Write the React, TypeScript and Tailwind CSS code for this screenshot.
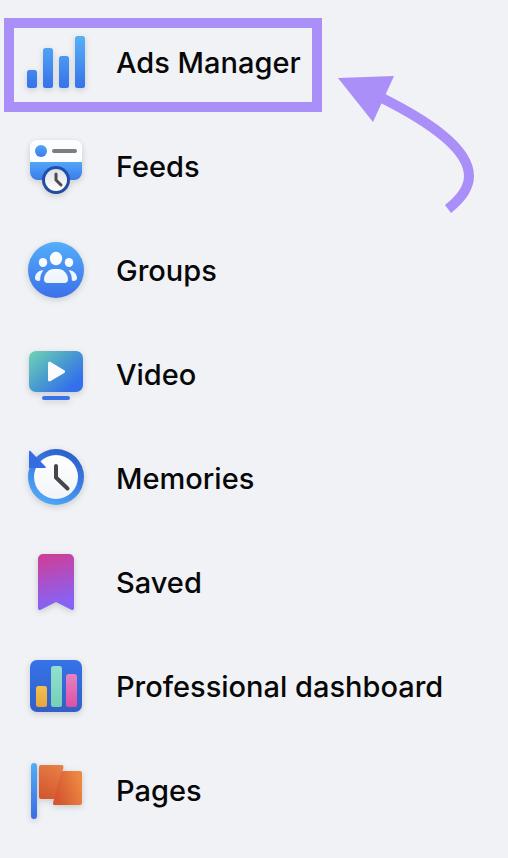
import type { ReactNode } from "react"

interface Shortcut {
  label: string
  link: string
  icon: ReactNode
}

function AdsManagerIcon() {
  return (
    <>
      <defs>
        <linearGradient id="ads-bar" gradientUnits="userSpaceOnUse" x1="0" y1="10" x2="0" y2="62">
          <stop offset="0" stopColor="#56b1f9" />
          <stop offset="1" stopColor="#3672ea" />
        </linearGradient>
      </defs>
      <g fill="url(#ads-bar)">
        <rect x="7" y="44" width="10" height="18" rx="2.5" />
        <rect x="23" y="22" width="10" height="40" rx="2.5" />
        <rect x="39" y="30" width="10" height="32" rx="2.5" />
        <rect x="55" y="10" width="10" height="52" rx="2.5" />
      </g>
    </>
  )
}

function FeedsIcon() {
  return (
    <>
      <defs>
        <linearGradient id="feeds-card" x1="0" y1="0" x2="0" y2="1">
          <stop offset="0" stopColor="#51a7f8" />
          <stop offset="1" stopColor="#3b7aea" />
        </linearGradient>
        <linearGradient id="feeds-face" x1="0" y1="0" x2="0" y2="1">
          <stop offset="0" stopColor="#dfe0e3" />
          <stop offset="1" stopColor="#ffffff" />
        </linearGradient>
        <linearGradient id="feeds-ring" x1="0" y1="0" x2="0" y2="1">
          <stop offset="0" stopColor="#1f4fae" />
          <stop offset="1" stopColor="#244a9e" />
        </linearGradient>
      </defs>
      <path d="M10 32V17a7 7 0 0 1 7-7h38a7 7 0 0 1 7 7v15z" fill="#fcfdfe" />
      <path d="M10 32h52v10a8 8 0 0 1-8 8H18a8 8 0 0 1-8-8z" fill="url(#feeds-card)" />
      <circle cx="21" cy="21" r="6" fill="url(#feeds-card)" />
      <path d="M34 21h21" stroke="#7b7d80" strokeWidth="4" strokeLinecap="round" />
      <circle cx="36" cy="50" r="14" fill="url(#feeds-ring)" />
      <circle cx="36" cy="50" r="11" fill="url(#feeds-face)" />
      <path d="M36 44v6l5 5" fill="none" stroke="#4b4c4f" strokeWidth="3" strokeLinecap="round" strokeLinejoin="round" />
    </>
  )
}

function GroupsIcon() {
  return (
    <>
      <defs>
        <linearGradient id="groups-disc" x1="0" y1="0" x2="0" y2="1">
          <stop offset="0" stopColor="#53aef8" />
          <stop offset="1" stopColor="#3b70ea" />
        </linearGradient>
        <linearGradient id="groups-people" gradientUnits="userSpaceOnUse" x1="0" y1="17" x2="0" y2="49">
          <stop offset="0" stopColor="#ffffff" />
          <stop offset="1" stopColor="#eef3fb" />
        </linearGradient>
      </defs>
      <circle cx="36" cy="36" r="28" fill="url(#groups-disc)" />
      <g fill="url(#groups-people)">
        <ellipse cx="36" cy="24.5" rx="6.2" ry="6.7" />
        <ellipse cx="23" cy="28.5" rx="4.2" ry="4.6" />
        <ellipse cx="49" cy="28.5" rx="4.2" ry="4.6" />
        <path d="M34 35h4c5.500 0 10 5 10 10.500 0 2-1.400 3.500-3.300 3.500H27.300C25.400 49 24 47.500 24 45.500 24 40 28.500 35 34 35z" />
        <path d="M22.500 36.200c.6 0 .7.500.4.900-1.800 2.400-2.700 5-2.700 8.200 0 1.100-.4 1.700-1.400 1.700-2.400 0-3.800-1-3.800-3 0-4 3.500-7.800 7.500-7.800z" />
        <path d="M49.500 36.200c-.6 0-.7.500-.4.900 1.800 2.400 2.700 5 2.700 8.200 0 1.100.4 1.700 1.400 1.700 2.400 0 3.800-1 3.800-3 0-4-3.500-7.800-7.500-7.800z" />
      </g>
    </>
  )
}

function VideoIcon() {
  return (
    <>
      <defs>
        <linearGradient id="video-screen" gradientUnits="userSpaceOnUse" x1="14" y1="13" x2="52" y2="56">
          <stop offset="0" stopColor="#6bceb6" />
          <stop offset="0.45" stopColor="#4b9fcc" />
          <stop offset="0.9" stopColor="#3570ec" />
        </linearGradient>
      </defs>
      <rect x="9" y="13" width="54" height="41" rx="7" fill="url(#video-screen)" />
      <path d="M28 25.500c0-1.500 1.300-2.200 2.600-1.400l13.600 8.100c1.200.7 1.200 2 0 2.700l-13.600 8.200c-1.300.8-2.600.1-2.600-1.400z" fill="#fafcfe" />
      <rect x="22" y="58" width="28" height="4" rx="2" fill="#3a72e8" />
    </>
  )
}

function MemoriesIcon() {
  return (
    <>
      <defs>
        <linearGradient id="memories-ring" gradientUnits="userSpaceOnUse" x1="46" y1="8" x2="20" y2="60">
          <stop offset="0" stopColor="#2a5fca" />
          <stop offset="0.5" stopColor="#3d82e6" />
          <stop offset="1" stopColor="#4fabf5" />
        </linearGradient>
        <linearGradient id="memories-face" x1="0" y1="0" x2="0" y2="1">
          <stop offset="0" stopColor="#ffffff" />
          <stop offset="1" stopColor="#f1f4f8" />
        </linearGradient>
      </defs>
      <circle cx="36" cy="35" r="28" fill="url(#memories-ring)" />
      <circle cx="36" cy="35" r="22" fill="url(#memories-face)" />
      <path d="M9 9.500c0-.9.800-1.100 1.400-.5l15 15.500c.8.800.3 1.500-.5 1.500H9z" fill="#356ce4" />
      <path d="M36 24v11.500l11.500 11" fill="none" stroke="#464749" strokeWidth="4" strokeLinecap="round" strokeLinejoin="round" />
    </>
  )
}

function SavedIcon() {
  return (
    <>
      <defs>
        <linearGradient id="saved-ribbon" gradientUnits="userSpaceOnUse" x1="29" y1="10" x2="40" y2="58">
          <stop offset="0" stopColor="#cb409a" />
          <stop offset="0.5" stopColor="#a951cb" />
          <stop offset="1" stopColor="#8663f4" />
        </linearGradient>
      </defs>
      <path
        d="M18 13a5 5 0 0 1 5-5h26a5 5 0 0 1 5 5v49c0 1.800-1.400 2.500-2.800 1.700L37 56.500c-.7-.4-1.300-.4-2 0l-14.200 7.200c-1.400.8-2.800.1-2.800-1.700z"
        fill="url(#saved-ribbon)"
      />
    </>
  )
}

function DashboardIcon() {
  return (
    <>
      <defs>
        <linearGradient id="dash-tile" x1="0" y1="0" x2="0" y2="1">
          <stop offset="0" stopColor="#3573e8" />
          <stop offset="1" stopColor="#335fc6" />
        </linearGradient>
        <linearGradient id="dash-yellow" x1="0" y1="0" x2="0" y2="1">
          <stop offset="0" stopColor="#f1c24d" />
          <stop offset="1" stopColor="#e5a53f" />
        </linearGradient>
        <linearGradient id="dash-green" x1="0" y1="0" x2="0" y2="1">
          <stop offset="0" stopColor="#93dfd1" />
          <stop offset="1" stopColor="#75d0b6" />
        </linearGradient>
        <linearGradient id="dash-pink" x1="0" y1="0" x2="0" y2="1">
          <stop offset="0" stopColor="#e683c2" />
          <stop offset="1" stopColor="#dc50a4" />
        </linearGradient>
      </defs>
      <rect x="10" y="10" width="52" height="52" rx="7" fill="url(#dash-tile)" />
      <rect x="16" y="36" width="11" height="21" rx="2.5" fill="url(#dash-yellow)" />
      <rect x="31" y="16" width="11" height="41" rx="2.5" fill="url(#dash-green)" />
      <rect x="46" y="24" width="11" height="33" rx="2.5" fill="url(#dash-pink)" />
    </>
  )
}

function PagesIcon() {
  return (
    <>
      <defs>
        <linearGradient id="pages-pole" x1="0" y1="0" x2="0" y2="1">
          <stop offset="0" stopColor="#52adf5" />
          <stop offset="1" stopColor="#3a6ce4" />
        </linearGradient>
        <linearGradient id="pages-back" x1="0.8" y1="0" x2="0.4" y2="1">
          <stop offset="0" stopColor="#e87f45" />
          <stop offset="1" stopColor="#d4582f" />
        </linearGradient>
        <linearGradient id="pages-front" x1="0" y1="0.4" x2="1" y2="0">
          <stop offset="0" stopColor="#d4562f" />
          <stop offset="0.85" stopColor="#ed8843" />
        </linearGradient>
      </defs>
      <rect x="11" y="9" width="6" height="56" rx="3" fill="url(#pages-pole)" />
      <path d="M19 13a2 2 0 0 1 2-2h20.500a2 2 0 0 1 1.900 2.500L36 45H21a2 2 0 0 1-2-2z" fill="url(#pages-back)" />
      <path d="M41 19c.3-1.200 1.100-2 2.300-2H60a2 2 0 0 1 2 2v30a2 2 0 0 1-2 2H34.500c-1.200 0-1.800-.8-1.500-2z" fill="url(#pages-front)" />
    </>
  )
}

const shortcuts: Shortcut[] = [
  { label: "Ads Manager", link: "#ads-manager", icon: <AdsManagerIcon /> },
  { label: "Feeds", link: "#feeds", icon: <FeedsIcon /> },
  { label: "Groups", link: "#groups", icon: <GroupsIcon /> },
  { label: "Video", link: "#video", icon: <VideoIcon /> },
  { label: "Memories", link: "#memories", icon: <MemoriesIcon /> },
  { label: "Saved", link: "#saved", icon: <SavedIcon /> },
  { label: "Professional dashboard", link: "#dashboard", icon: <DashboardIcon /> },
  { label: "Pages", link: "#pages", icon: <PagesIcon /> },
]

// Callout drawn over the first entry
function Callout() {
  return (
    <div className="pointer-events-none" aria-hidden="true">
      <span className="absolute top-2 bottom-0.5 left-1 right-0 border-10 border-[#a98ff7]" />
      <svg className="absolute top-[60px] left-full ml-4 overflow-visible" width="140" height="146" viewBox="338 70 140 146">
        <path d="M338 78l56-2-21 46z" fill="#a98ff7" />
        <path d="M380 97C424 119 469 147 469 176C469 188 462 198 448 209" fill="none" stroke="#a98ff7" strokeWidth="10" />
      </svg>
    </div>
  )
}

export default function App() {
  return (
    <nav aria-label="Shortcuts" className="min-h-screen bg-[#f0f2f6] pt-[10px] pb-4 font-['Inter','Liberation_Sans',sans-serif]">
      <ul className="flex flex-col items-start">
        {shortcuts.map((item, i) => (
          <li key={item.label} className="relative">
            <a href={item.link} className="flex items-center gap-6 py-4 pl-5 pr-[21px] text-[29px] leading-9 font-medium text-[#080809]">
              <svg
                className="size-[72px] shrink-0 drop-shadow-[0_2px_3px_rgba(0,0,0,0.16)]"
                viewBox="0 0 72 72"
                aria-hidden="true"
              >
                {item.icon}
              </svg>
              <span className="pt-0.5">{item.label}</span>
            </a>
            {i === 0 && <Callout />}
          </li>
        ))}
      </ul>
    </nav>
  )
}
